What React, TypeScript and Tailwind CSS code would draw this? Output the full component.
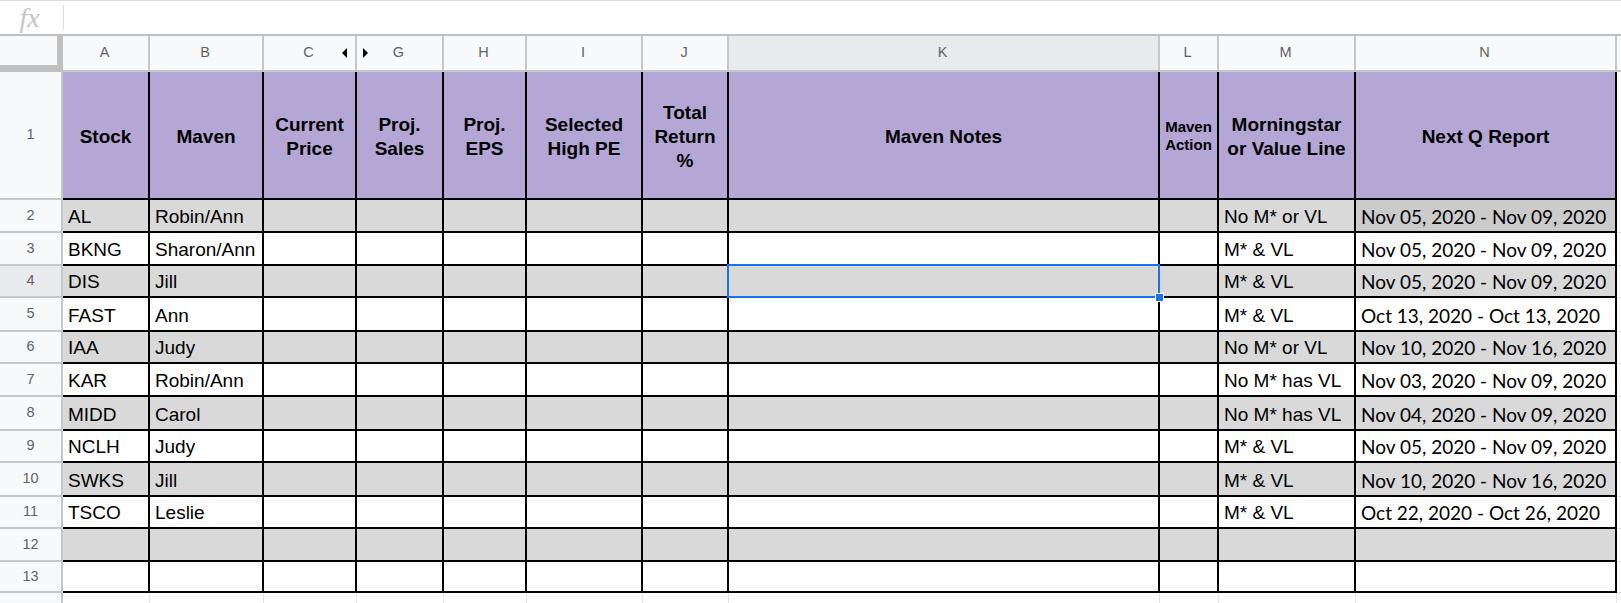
import React from 'react';

const GRID =
  'grid grid-cols-[63px_87px_114px_93px_87px_83px_116px_86px_431px_59px_137px_261px_4px]';

const letters = ['A', 'B', 'C', 'G', 'H', 'I', 'J', 'K', 'L', 'M', 'N'];

const headers: React.ReactNode[] = [
  'Stock',
  'Maven',
  <>Current<br />Price</>,
  <>Proj.<br />Sales</>,
  <>Proj.<br />EPS</>,
  <>Selected<br />High PE</>,
  <>Total<br />Return<br />%</>,
  'Maven Notes',
  <div className="-mt-[3px] text-[15px] leading-[18px]">Maven<br />Action</div>,
  <>Morningstar<br />or Value Line</>,
  'Next Q Report',
];

const rows = [
  ['AL', 'Robin/Ann', 'No M* or VL', 'Nov 05, 2020 - Nov 09, 2020'],
  ['BKNG', 'Sharon/Ann', 'M* & VL', 'Nov 05, 2020 - Nov 09, 2020'],
  ['DIS', 'Jill', 'M* & VL', 'Nov 05, 2020 - Nov 09, 2020'],
  ['FAST', 'Ann', 'M* & VL', 'Oct 13, 2020 - Oct 13, 2020'],
  ['IAA', 'Judy', 'No M* or VL', 'Nov 10, 2020 - Nov 16, 2020'],
  ['KAR', 'Robin/Ann', 'No M* has VL', 'Nov 03, 2020 - Nov 09, 2020'],
  ['MIDD', 'Carol', 'No M* has VL', 'Nov 04, 2020 - Nov 09, 2020'],
  ['NCLH', 'Judy', 'M* & VL', 'Nov 05, 2020 - Nov 09, 2020'],
  ['SWKS', 'Jill', 'M* & VL', 'Nov 10, 2020 - Nov 16, 2020'],
  ['TSCO', 'Leslie', 'M* & VL', 'Oct 22, 2020 - Oct 26, 2020'],
  ['', '', '', ''],
  ['', '', '', ''],
];

// measured row heights (incl. bottom border)
const heights = [33, 33, 32, 34, 32, 33, 34, 32, 34, 32, 33, 31];

function DataRow({ idx, cells }: { idx: number; cells: string[] }) {
  const gray = idx % 2 === 0;
  const bg = gray ? 'bg-[#d9d9d9]' : 'bg-white';
  const rowNum = idx + 2;
  const selected = rowNum === 4;
  // values by column index: A, B, M, N
  const values: Record<number, string> = { 0: cells[0], 1: cells[1], 9: cells[2], 10: cells[3] };

  return (
    <div className={GRID} style={{ height: heights[idx] }}>
      <div
        className={`flex items-center justify-center border-r-2 border-b-2 border-[#c7c7c7] text-[14.5px] text-[#5f6368] ${
          selected ? 'bg-[#e8eaed]' : 'bg-[#f8f9fa]'
        }`}
      >
        {rowNum}
      </div>
      {letters.map((l, c) => {
        const nCol = c === 10;
        const cellBg = nCol && idx === 0 ? 'bg-[#cbcbcb]' : bg;
        return (
          <div
            key={l}
            className={`relative flex min-w-0 items-end border-r-2 border-b-2 border-black pl-[5px] pb-[3px] ${cellBg} ${
              nCol
                ? "font-['Lato',sans-serif] text-[19px] leading-[22px]"
                : 'text-[19px] leading-[22px]'
            }`}
          >
            <span className="overflow-hidden whitespace-nowrap">{values[c] ?? ''}</span>
            {selected && l === 'K' && (
              <>
                <div className="absolute -top-[2px] -left-[2px] -right-[2px] -bottom-[2px] z-10 border-2 border-[#1a73e8]" />
                <div className="absolute -right-[6px] -bottom-[6px] z-20 h-[9px] w-[9px] border border-white bg-[#1a73e8]" />
              </>
            )}
          </div>
        );
      })}
      <div className="border-b border-[#e2e3e3] bg-white" />
    </div>
  );
}

export default function App() {
  return (
    <div className="h-[603px] w-[1621px] overflow-hidden bg-white font-['Liberation_Sans',Arial,sans-serif] text-black">
      {/* Formula bar */}
      <div className="flex h-[36px] items-center border-t border-b-2 border-t-[#dadce0] border-b-[#c0c0c0]">
        <div className="flex h-full w-[63px] items-center justify-center pr-[4px]">
          <span className="font-['Liberation_Serif',serif] text-[28px] italic leading-[32px] text-[#c4c4c4]">fx</span>
        </div>
        <div className="h-[25px] w-px bg-[#dadce0]" />
      </div>

      {/* Column letters */}
      <div className={`${GRID} h-[36px]`}>
        <div className="border-r-[6px] border-b-[7px] border-[#c0c0c0] bg-[#f8f9fa]" />
        {letters.map((l) => (
          <div
            key={l}
            className={`flex items-center border-r-2 border-b-2 border-[#c7c7c7] text-[14.5px] text-[#5f6368] ${
              l === 'K' ? 'bg-[#e8eaed]' : 'bg-[#f8f9fa]'
            }`}
          >
            <div className="flex flex-1 items-center justify-start pl-[6px]">
              {l === 'G' && (
                <div className="h-0 w-0 border-y-[5px] border-l-[5px] border-y-transparent border-l-black" />
              )}
            </div>
            <span>{l}</span>
            <div className="flex flex-1 items-center justify-end pr-[8px]">
              {l === 'C' && (
                <div className="h-0 w-0 border-y-[5px] border-r-[5px] border-y-transparent border-r-black" />
              )}
            </div>
          </div>
        ))}
        <div className="border-b-2 border-[#c7c7c7] bg-[#f8f9fa]" />
      </div>

      {/* Row 1 header */}
      <div className={`${GRID} h-[128px]`}>
        <div className="flex items-center justify-center border-r-2 border-b-2 border-[#c7c7c7] bg-[#f8f9fa] text-[14.5px] text-[#5f6368]">
          1
        </div>
        {headers.map((h, i) => (
          <div
            key={i}
            className="flex items-center justify-center border-r-2 border-b-2 border-black bg-[#b4a7d6] pt-[4px] text-center text-[19px] font-bold leading-[24px]"
          >
            <div>{h}</div>
          </div>
        ))}
        <div className="bg-white" />
      </div>

      {rows.map((r, i) => (
        <DataRow key={i} idx={i} cells={r} />
      ))}

      {/* partial row below */}
      <div className={`${GRID} h-[12px]`}>
        <div className="border-r-2 border-[#c7c7c7] bg-[#f8f9fa]" />
        {letters.map((l) => (
          <div key={l} className="border-r border-[#e2e3e3] bg-white" />
        ))}
        <div className="bg-white" />
      </div>
    </div>
  );
}
